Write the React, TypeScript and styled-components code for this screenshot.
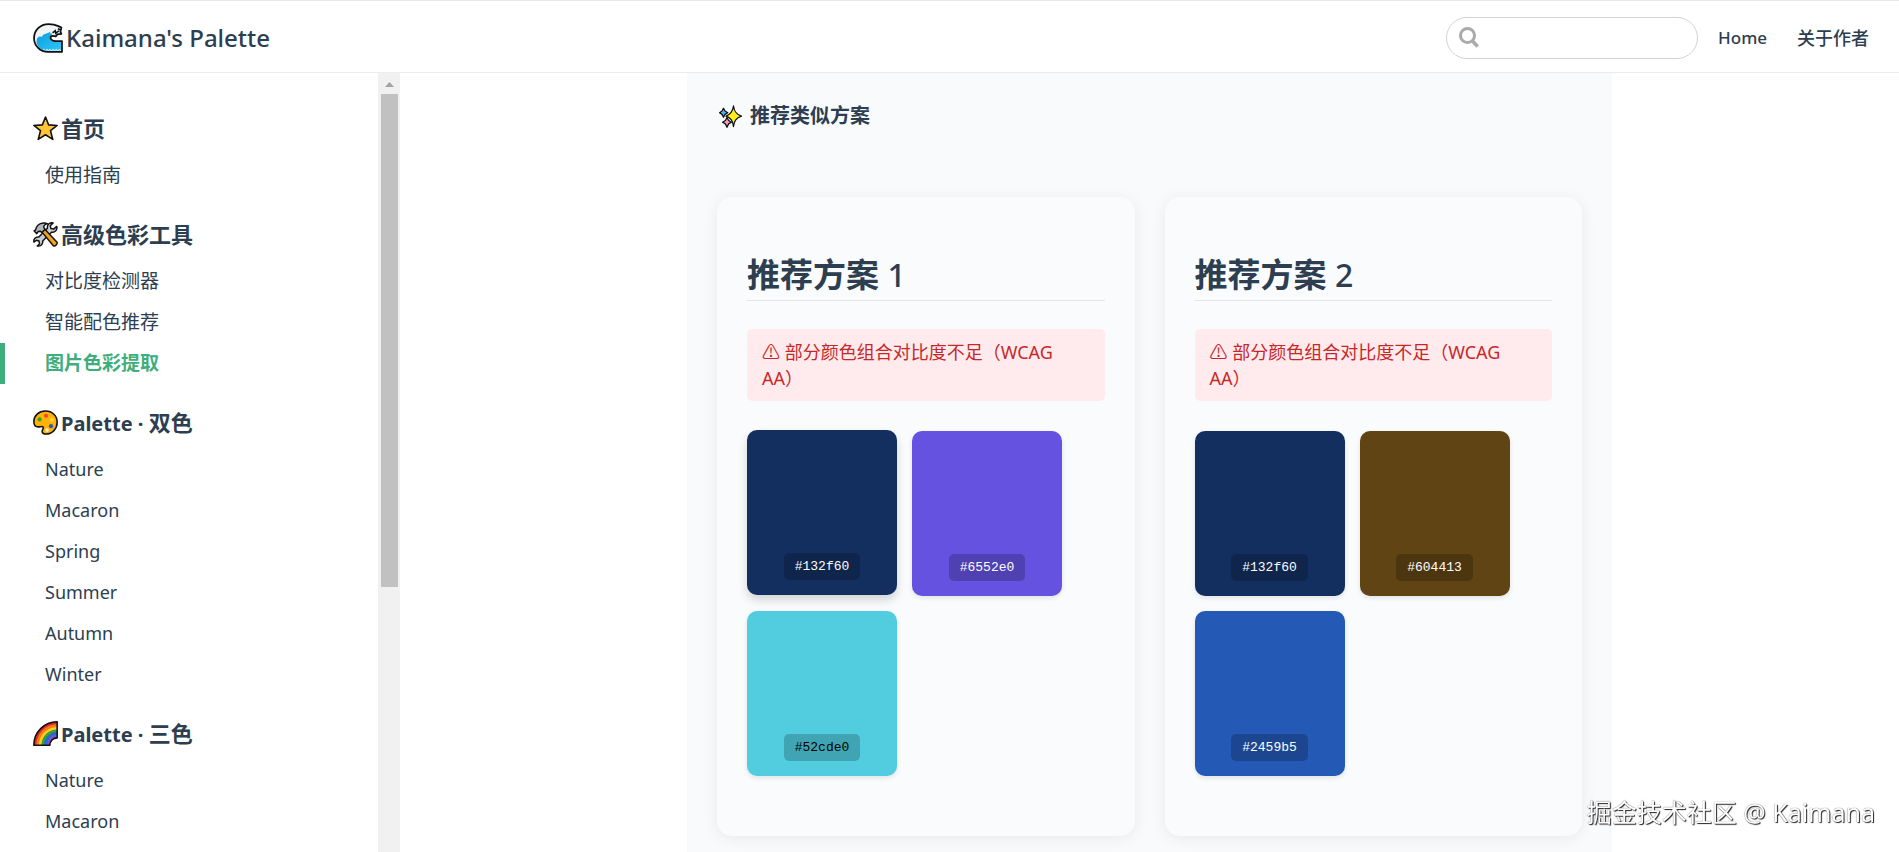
import React from "react";
import styled, { createGlobalStyle } from "styled-components";

const GlobalStyle = createGlobalStyle`
  *, *::before, *::after { box-sizing: border-box; }
  body {
    margin: 0;
    background: #fff;
    color: #2c3e50;
    font-family: "Noto Sans", "Noto Sans CJK SC", sans-serif;
  }
  a { color: inherit; text-decoration: none; }
`;

const Page = styled.div`
  display: flex;
  flex-direction: column;
  height: 100vh;
  overflow: hidden;
`;

const Header = styled.header`
  flex: none;
  display: flex;
  align-items: center;
  justify-content: space-between;
  height: 73px;
  padding: 2px 30px 0 33px;
  border-top: 1px solid #e8e8e8;
  border-bottom: 1px solid #eaecef;
`;

const Brand = styled.a`
  display: flex;
  align-items: center;
  gap: 3px;
  font-size: 24px;
  font-weight: 500;
  line-height: 36px;
`;

const Tools = styled.div`
  display: flex;
  align-items: center;
  gap: 20px;
`;

const SearchBox = styled.label`
  display: flex;
  align-items: center;
  gap: 8px;
  width: 252px;
  height: 42px;
  padding: 0 12px;
  border: 1px solid #cfd4db;
  border-radius: 21px;
`;

const SearchInput = styled.input`
  flex: 1;
  min-width: 0;
  border: 0;
  outline: 0;
  background: transparent;
  color: #4e6e8e;
  font: inherit;
  font-size: 18px;
`;

const TopNav = styled.nav`
  display: flex;
  align-items: center;
  gap: 30px;
`;

const TopLink = styled.a<{ $latin?: boolean }>`
  font-size: ${p => (p.$latin ? 17 : 18)}px;
  font-weight: 500;
  line-height: 28px;
`;

const Body = styled.div`
  flex: 1;
  display: flex;
  min-height: 0;
`;

const Sidebar = styled.aside`
  flex: none;
  display: flex;
  width: 400px;
`;

const SideNav = styled.nav`
  flex: 1;
  min-height: 0;
  padding-top: 37px;
  overflow: hidden;
`;

const Group = styled.section`
  margin-bottom: 20px;
`;

const GroupTitle = styled.h3`
  display: flex;
  align-items: center;
  gap: 3px;
  height: 37px;
  margin: 0 0 8px;
  padding-left: 33px;
  font-size: 22px;
  font-weight: 700;
  line-height: 37px;
`;

const LatinPart = styled.span`
  font-size: 20px;
`;

const ItemList = styled.ul`
  margin: 0;
  padding: 0;
  list-style: none;
`;

const ItemLink = styled.a<{ $latin: boolean; $active: boolean }>`
  display: block;
  height: 41px;
  padding-left: 40px;
  border-left: 5px solid ${p => (p.$active ? "#3eaf7c" : "transparent")};
  color: ${p => (p.$active ? "#3eaf7c" : "#2c3e50")};
  font-size: ${p => (p.$latin ? 18 : 19)}px;
  font-weight: ${p => (p.$active ? 600 : 400)};
  line-height: 41px;
`;

const ScrollTrack = styled.div`
  display: flex;
  flex-direction: column;
  align-items: center;
  width: 22px;
  padding-top: 9px;
  background: #f1f1f1;
`;

const ScrollThumb = styled.div`
  width: 17px;
  height: 64%;
  margin-top: 7px;
  background: #c1c1c1;
`;

const Main = styled.main`
  flex: 1;
  min-width: 0;
`;

const Panel = styled.section`
  max-width: 925px;
  min-height: 100%;
  margin: 0 auto;
  padding: 29px 30px;
  background: #f8fafc;
`;

const PanelTitle = styled.h4`
  display: flex;
  align-items: center;
  gap: 8px;
  margin: 0 0 67px 2px;
  font-size: 20px;
  font-weight: 600;
  line-height: 28px;
`;

const CardGrid = styled.div`
  display: grid;
  grid-template-columns: repeat(2, minmax(0, 1fr));
  gap: 30px;
`;

const Card = styled.article`
  padding: 30px;
  border-radius: 15px;
  background: #f9fbfc;
  box-shadow: 0 2px 15px rgba(0, 0, 0, 0.07);
`;

const CardTitle = styled.h2`
  margin: 25px 0 28px;
  padding-bottom: 3px;
  border-bottom: 1px solid #e3e7eb;
  font-size: 33px;
  font-weight: 600;
  line-height: 45px;
`;

const TitleNumber = styled.span`
  font-weight: 500;
  font-size: 32px;
`;

const Warning = styled.p`
  margin: 0 0 30px;
  padding: 10px 15px;
  border-radius: 5px;
  background: #ffebee;
  color: #c62828;
  font-size: 18px;
  line-height: 26px;
`;

const Swatches = styled.div`
  display: flex;
  flex-wrap: wrap;
  gap: 15px;
  margin-bottom: 30px;
`;

const Swatch = styled.button<{ $color: string; $raised?: boolean }>`
  display: flex;
  align-items: flex-end;
  justify-content: center;
  width: 150px;
  height: 165px;
  padding: 0 0 15px;
  border: 0;
  border-radius: 10px;
  background: ${p => p.$color};
  box-shadow: ${p => (p.$raised ? "0 5px 10px rgba(0, 0, 0, 0.16)" : "0 2px 5px rgba(0, 0, 0, 0.1)")};
  transform: ${p => (p.$raised ? "translateY(-1px)" : "none")};
  cursor: pointer;
`;

const Code = styled.span<{ $dark?: boolean }>`
  padding: 0 11px;
  border-radius: 5px;
  background: rgba(0, 0, 0, 0.2);
  color: ${p => (p.$dark ? "#000" : "#fff")};
  font-family: "Liberation Mono", monospace;
  font-size: 13px;
  line-height: 27px;
`;

const Watermark = styled.div`
  position: fixed;
  right: 24px;
  bottom: 22px;
  color: #fff;
  font-size: 25px;
  line-height: 36px;
  text-shadow: 1px 1px 1px #222, 0 0 1px #444;
`;

const WaveIcon = () => (
  <svg width="30" height="30" viewBox="0 0 29 29" aria-hidden="true">
    <defs>
      <linearGradient id="sea" x1="0" y1="0" x2="1" y2="1">
        <stop offset="0" stopColor="#0b9bd6" />
        <stop offset="0.5" stopColor="#1cb4ee" />
        <stop offset="1" stopColor="#35c4f6" />
      </linearGradient>
    </defs>
    <path d="M15 1C7 1 1 7 1 14.5S7 28 14.5 28H28V17.5h-6c-3.500 0-5.500-2-5-4 1-1.600 3.500-1 5-.5l1.500-2 4-.5-1-2 1-4-3-1.500C21.500 1.500 18 1 15 1Z" fill="#f1f3f4" />
    <path d="M3.500 19C3 14 6 12 8.500 13.500c1.500-3 4-3 6.500-4l1.500-1 .5 2 2-.5-2.500 3.500c-.5 3 2 4.500 5.500 4.500h5.500v9.500H14C9 27.500 5 24 3.500 19Z" fill="url(#sea)" />
    <path d="M9 27l1.500-1.500L12 27l1.500-1.500L15 27l1.500-1.500L18 27l1.500-1.500L21 27l1.500-1.500L24 27l1.500-1.500L27 27" fill="none" stroke="#c9effc" strokeWidth="1" />
    <path d="M15 1C7 1 1 7 1 14.500S7 28 14.500 28H28V17.500h-6c-3.500 0-5.500-2-5-4 1-1.600 3.500-1 5-.5l1.500-2 4-.5-1-2 1-4-3-1.500C21.500 1.500 18 1 15 1Z" fill="none" stroke="#111" strokeWidth="1.700" strokeLinejoin="round" />
    <path d="M19 9.500l2.500-2 .5 2.500 3-2.500M24 5.500l2.500 1" fill="none" stroke="#111" strokeWidth="1.500" />
  </svg>
);

const StarIcon = () => (
  <svg width="25" height="25" viewBox="0 0 24 24" aria-hidden="true">
    <path d="M12 1l3 7.500 8.200.6-6.400 5 2.200 8.400-7-4.500-7 4.500 2.200-8.400-6.400-5L9 8.500Z" fill="#ffc534" stroke="#111" strokeWidth="1.500" strokeLinejoin="round" />
  </svg>
);

const ToolsIcon = () => (
  <svg width="25" height="25" viewBox="0 0 24 24" aria-hidden="true">
    <path d="M22.800 4.200l-3 2.600-2.600-.6-.6-2.500 2.700-2.800c-3-.9-6 1.500-5.400 5L5.600 14.500c-3-.5-5.400 2-4.700 4.800l2.300-1.800 2.600.8.500 2.500-2.200 2.200c3 .8 5.700-1.700 5.200-4.800l8.500-8.400c3.400.6 5.900-2.500 5-5.600Z" fill="#c9ced2" stroke="#111" strokeWidth="1.400" strokeLinejoin="round" />
    <path d="M8.500 9.500l2.600-2.700 12 12.600c.6 1.700-1.600 4.200-3.600 3.400Z" fill="#f5a312" stroke="#111" strokeWidth="1.400" strokeLinejoin="round" />
    <path d="M1 8.500l1.500-1c.5-3 3-6.300 7.500-6.600 1.800-.1 3 .3 4 .9-2.500.3-3.800 1.800-3.600 3.600l1.200 1.500-3.100 3.200-1.600-1.300-1.900.3-1.400 2.100Z" fill="#b1b7bc" stroke="#111" strokeWidth="1.400" strokeLinejoin="round" />
  </svg>
);

const PaletteIcon = () => (
  <svg width="25" height="25" viewBox="0 0 24 24" aria-hidden="true">
    <path d="M12 1C5.500 1 .8 5.500.8 11.200c0 3 1.800 5 4.400 5 2 0 3.800-1 4.600.2.900 1.400-1.600 2.800-1 4.700.5 1.500 2 2 3.700 2 6 0 10.700-5 10.700-11.300C23.200 5.500 18.500 1 12 1Z" fill="#ffb30a" stroke="#111" strokeWidth="1.500" />
    <circle cx="12.500" cy="5.500" r="2" fill="#ef4b2b" />
    <circle cx="6.300" cy="9" r="2" fill="#3d9e24" />
    <circle cx="18" cy="9.500" r="1.900" fill="#ffd43a" />
    <circle cx="17.300" cy="15.500" r="2" fill="#2f58b8" />
    <circle cx="13.500" cy="19.300" r="1.700" fill="#fff0c8" />
  </svg>
);

const RAINBOW = ["#e8281c", "#f77b1b", "#ffd21f", "#35a336", "#2269d8", "#7b55cf"];
const RainbowIcon = () => (
  <svg width="25" height="25" viewBox="0 0 24 24" aria-hidden="true">
    <path d="M.8 23.200C.8 10.800 10.800.8 23.200.8v15.400c-4 0-7 3-7 7Z" fill="#e8281c" />
    {RAINBOW.map((color, i) => {
      const r = 21.200 - i * 2.500;
      return <path key={color} d={`M${23.200 - r} 23.200A${r} ${r} 0 0 1 23.200 ${23.200 - r}`} fill="none" stroke={color} strokeWidth="2.700" />;
    })}
    <path d="M.8 23.200C.8 10.800 10.800.8 23.200.8v15.400c-4 0-7 3-7 7Z" fill="none" stroke="#111" strokeWidth="1.500" strokeLinejoin="round" />
  </svg>
);

const SparklesIcon = () => (
  <svg width="23" height="23" viewBox="0 0 23 23" aria-hidden="true">
    <g stroke="#111" strokeWidth="1.300" strokeLinejoin="round">
      <path d="M4.500 3.200l1.500 2.800 2.800 1.700-2.800 1.700-1.500 2.800-1.500-2.800-2.400-1.700 2.400-1.700Z" fill="#45b8ea" />
      <path d="M8 12.500l1.600 3 2.800 1.700-2.800 1.700L8 22.200l-1.600-3.300-2.800-1.700 2.800-1.700Z" fill="#f4a0c4" />
      <path d="M14.500 1c.8 5.500 2.500 8.300 7.900 10.200-5.400 1.900-7.100 4.500-7.900 10.300-.8-5.800-2.500-8.400-7.500-10.300 5-1.900 6.700-4.700 7.500-10.200Z" fill="#fff01c" />
    </g>
  </svg>
);

const SearchIcon = () => (
  <svg width="20" height="21" viewBox="0 0 20 21" fill="none" stroke="#aaa" aria-hidden="true">
    <circle cx="8.500" cy="8.500" r="7" strokeWidth="3" />
    <path d="M13.500 14l5.200 5.500" strokeWidth="3.500" />
  </svg>
);

const ArrowUp = () => (
  <svg width="9" height="5" viewBox="0 0 9 5" aria-hidden="true">
    <path d="M0 5L4.500 0 9 5Z" fill="#a3a3a3" />
  </svg>
);

type NavGroup = { icon: React.ReactNode; latin?: string; title: string; items: string[] };

const GROUPS: NavGroup[] = [
  { icon: <StarIcon />, title: "首页", items: ["使用指南"] },
  { icon: <ToolsIcon />, title: "高级色彩工具", items: ["对比度检测器", "智能配色推荐", "图片色彩提取"] },
  { icon: <PaletteIcon />, latin: "Palette · ", title: "双色", items: ["Nature", "Macaron", "Spring", "Summer", "Autumn", "Winter"] },
  { icon: <RainbowIcon />, latin: "Palette · ", title: "三色", items: ["Nature", "Macaron"] },
];
const ACTIVE = "图片色彩提取";

type Color = { hex: string; dark?: boolean; raised?: boolean };
const SCHEMES: Color[][] = [
  [{ hex: "#132f60", raised: true }, { hex: "#6552e0" }, { hex: "#52cde0", dark: true }],
  [{ hex: "#132f60" }, { hex: "#604413" }, { hex: "#2459b5" }],
];

export default function App() {
  return (
    <Page>
      <GlobalStyle />
      <Header>
        <Brand href="#">
          <WaveIcon />
          <span>Kaimana's Palette</span>
        </Brand>
        <Tools>
          <SearchBox>
            <SearchIcon />
            <SearchInput type="search" aria-label="Search" />
          </SearchBox>
          <TopNav>
            <TopLink href="#" $latin>Home</TopLink>
            <TopLink href="#">关于作者</TopLink>
          </TopNav>
        </Tools>
      </Header>
      <Body>
        <Sidebar>
          <SideNav>
            {GROUPS.map(group => (
              <Group key={group.title}>
                <GroupTitle>
                  {group.icon}
                  <span>
                    {group.latin && <LatinPart>{group.latin}</LatinPart>}
                    {group.title}
                  </span>
                </GroupTitle>
                <ItemList>
                  {group.items.map(item => (
                    <li key={item}>
                      <ItemLink href="#" $latin={/^[A-Z]/.test(item)} $active={item === ACTIVE}>{item}</ItemLink>
                    </li>
                  ))}
                </ItemList>
              </Group>
            ))}
          </SideNav>
          <ScrollTrack aria-hidden="true">
            <ArrowUp />
            <ScrollThumb />
          </ScrollTrack>
        </Sidebar>
        <Main>
          <Panel>
            <PanelTitle>
              <SparklesIcon />
              推荐类似方案
            </PanelTitle>
            <CardGrid>
              {SCHEMES.map((colors, i) => (
                <Card key={i}>
                  <CardTitle>
                    推荐方案 <TitleNumber>{i + 1}</TitleNumber>
                  </CardTitle>
                  <Warning>⚠ 部分颜色组合对比度不足（WCAG AA）</Warning>
                  <Swatches>
                    {colors.map(c => (
                      <Swatch key={c.hex} type="button" $color={c.hex} $raised={c.raised}>
                        <Code $dark={c.dark}>{c.hex}</Code>
                      </Swatch>
                    ))}
                  </Swatches>
                </Card>
              ))}
            </CardGrid>
          </Panel>
        </Main>
      </Body>
      <Watermark>掘金技术社区 @ Kaimana</Watermark>
    </Page>
  );
}
